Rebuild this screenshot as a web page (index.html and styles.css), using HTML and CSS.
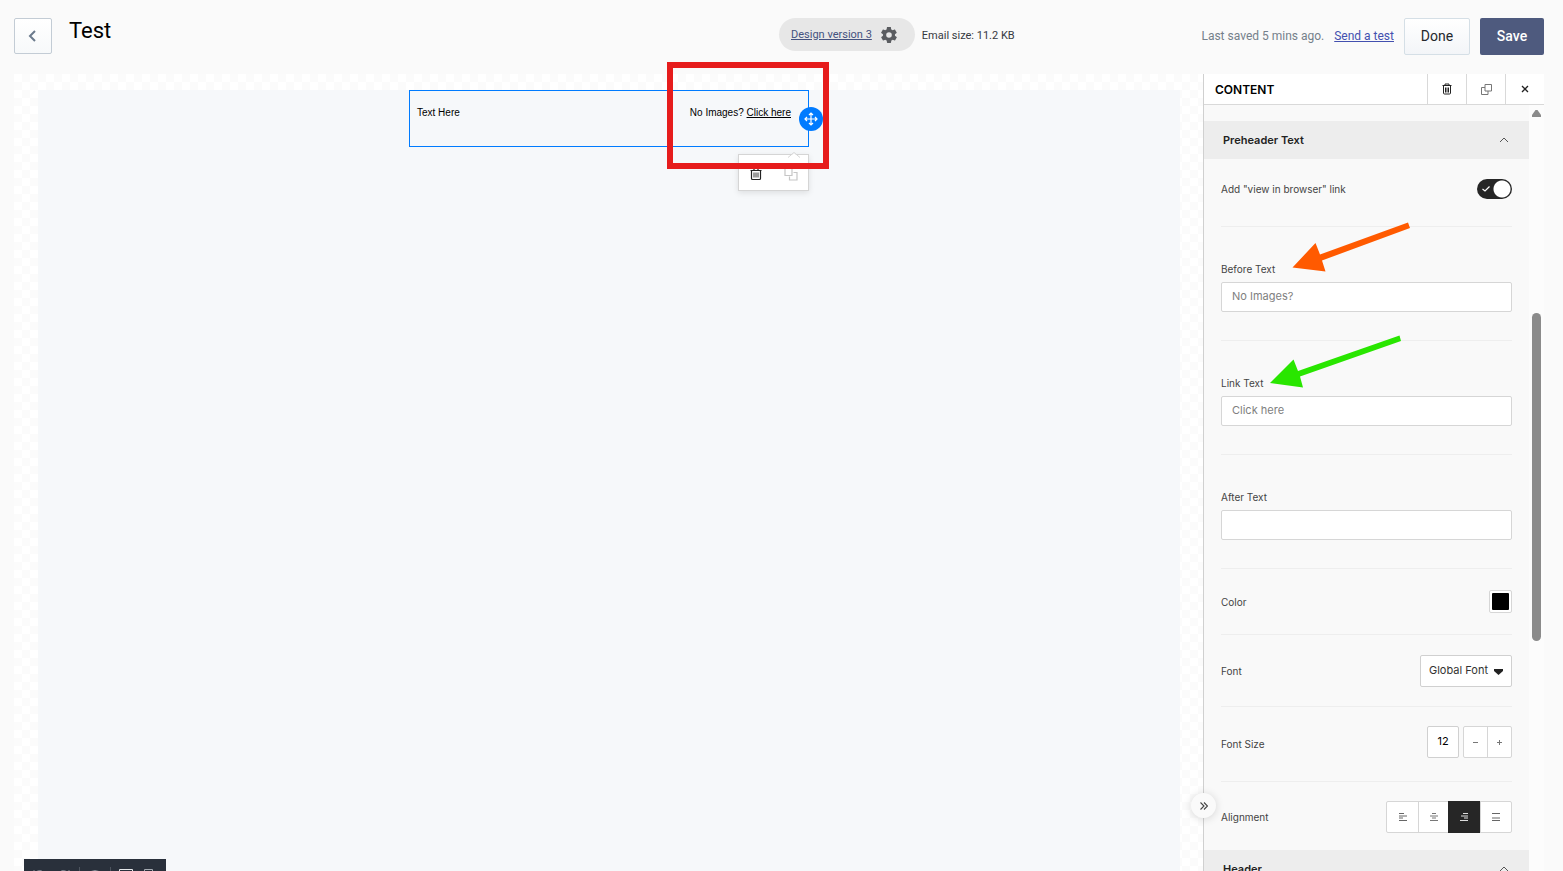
FILE: index.html
```
<!DOCTYPE html>
<html lang="en">
<head>
    <meta charset="UTF-8">
    <title>Test</title>
    <link rel="stylesheet" href="styles.css">
</head>
<body>

<!-- top bar -->
<header class="topbar">
    <button class="btn_back" type="button" aria-label="Back">
        <svg width="8" height="12" viewBox="0 0 8 12"><path d="M7 1L2 6l5 5" fill="none" stroke="#6b7a8c" stroke-width="2"/></svg>
    </button>
    <h1 class="title">Test</h1>
    <div class="version">
        <a href="#">Design version 3</a>
        <svg width="16" height="16" viewBox="2 2 20 20"><path fill="#5a5c60" d="M19.4 13c0-.3.1-.6.1-1s0-.7-.1-1l2.100-1.600c.2-.2.200-.400.100-.600l-2-3.500c-.1-.2-.4-.3-.6-.2l-2.500 1c-.5-.4-1.100-.7-1.700-1l-.4-2.600c0-.2-.2-.4-.5-.4h-4c-.3 0-.5.2-.5.4l-.4 2.600c-.6.3-1.200.6-1.700 1l-2.500-1c-.2-.1-.5 0-.6.2l-2 3.500c-.1.2-.1.500.1.600L4.500 11c0 .3-.1.600-.1 1s0 .7.1 1l-2.100 1.600c-.2.2-.2.400-.1.600l2 3.500c.1.2.4.3.6.2l2.500-1c.5.400 1.100.7 1.700 1l.4 2.600c0 .2.2.4.5.4h4c.3 0 .5-.2.5-.4l.4-2.600c.6-.3 1.200-.6 1.700-1l2.500 1c.2.1.5 0 .6-.2l2-3.500c.1-.2.1-.5-.1-.6L19.400 13zM12 15.500a3.500 3.500 0 1 1 0-7 3.500 3.500 0 0 1 0 7z"/></svg>
    </div>
    <span class="size">Email size: 11.2 KB</span>
    <div class="actions">
        <span class="saved">Last saved 5 mins ago.</span>
        <a class="send" href="#">Send a test</a>
        <button class="btn btn_done" type="button">Done</button>
        <button class="btn btn_save" type="button">Save</button>
    </div>
</header>

<div class="editor">

    <!-- email canvas -->
    <main class="stage">
        <div class="canvas">
            <div class="block">
                <span>Text Here</span>
                <span>No Images? <a href="#">Click here</a></span>
                <button class="move" type="button" aria-label="Move">
                    <svg width="14" height="14" viewBox="0 0 14 14"><path d="M7 1v12M1 7h12M5 3l2-2 2 2M5 11l2 2 2-2M3 5L1 7l2 2M11 5l2 2-2 2" fill="none" stroke="#fff" stroke-width="1.200"/></svg>
                </button>
                <div class="block_tools">
                    <svg class="caret" width="12" height="6" viewBox="0 0 12 6"><path d="M0 6l6-5 6 5z" fill="#fff"/><path d="M0 5.500l6-5 6 5" fill="none" stroke="#d5d5d5"/></svg>
                    <button type="button" aria-label="Delete">
                        <svg width="12" height="14" viewBox="0 0 12 14"><path d="M0.500 3.500h11M4 3V1.500h4V3M1.500 3.500v8q0 1 1 1h7q1 0 1-1v-8" fill="none" stroke="#222" stroke-width="1.200"/><path d="M4 5.500v5M6 5.500v5M8 5.500v5" stroke="#222" stroke-width=".9"/></svg>
                    </button>
                    <button type="button" aria-label="Duplicate">
                        <svg width="14" height="14" viewBox="0 0 14 14"><path d="M1 0.500h7v8H1zM9.500 5.500H13v7.500H5.500V9.500" fill="none" stroke="#c6c6c6" stroke-width="1.200"/></svg>
                    </button>
                </div>
                <div class="highlight"></div>
            </div>
        </div>

        <div class="dock">
            <svg width="142" height="36" viewBox="0 0 142 36" fill="none" stroke="#8b929b">
                <path d="M10 11v4h4M11 14q5-5 9 0M45 11v4h-4M44 14q-5-5-9 0M64 15q7-7 14 0-7 7-14 0"/>
                <path d="M55.500 8v18M86.500 8v18" stroke="#4d545e"/>
                <path d="M95.500 10.500h13v9h-13zM99 23.500h6" stroke="#e4e7ea"/>
                <path d="M120.500 10.500h8v13h-8z" stroke="#a5abb2"/>
            </svg>
        </div>
    </main>

    <!-- settings panel -->
    <aside class="panel">
        <div class="panel_head">
            <h2>CONTENT</h2>
            <button type="button" aria-label="Delete">
                <svg width="10" height="12" viewBox="0 0 10 12"><path d="M0.500 2.500h9M3 2.500V1h4v1.500M1.500 2.500V10q0 1 1 1h5q1 0 1-1V2.500M3.500 4.500v5M5 4.500v5M6.500 4.500v5" fill="none" stroke="#222"/></svg>
            </button>
            <button type="button" aria-label="Duplicate">
                <svg width="11" height="11" viewBox="0 0 11 11"><path d="M4 0.500h6.500V7H4zM4 3.500H0.500v7H7V7" fill="none" stroke="#777"/></svg>
            </button>
            <button type="button" aria-label="Close">
                <svg width="8" height="8" viewBox="0 0 8 8"><path d="M1 1l6 6M7 1L1 7" stroke="#222" stroke-width="1.300"/></svg>
            </button>
        </div>

        <div class="panel_body">
            <form class="settings">
                <div class="section">
                    <h3>Preheader Text</h3>
                    <svg width="10" height="6" viewBox="0 0 10 6"><path d="M1 5l4-4 4 4" fill="none" stroke="#555"/></svg>
                </div>

                <div class="row row_switch">
                    <label for="browser_link">Add "view in browser" link</label>
                    <span class="switch">
                        <input type="checkbox" id="browser_link" checked>
                        <svg width="8" height="6" viewBox="0 0 8 6"><path d="M0.500 3l2.500 2L7.500 0.500" fill="none" stroke="#fff" stroke-width="1.200"/></svg>
                    </span>
                </div>

                <div class="field">
                    <label for="before_text">Before Text</label>
                    <input type="text" id="before_text" value="No Images?">
                    <svg class="arrow arrow_before" width="118" height="50" viewBox="0 0 118 50"><path d="M0.500 45.500L23.500 21 28 32.500 116 .5 118 6 30 38.500 33.500 49.500z" fill="#ff5a00"/></svg>
                </div>

                <div class="field">
                    <label for="link_text">Link Text</label>
                    <input type="text" id="link_text" value="Click here">
                    <svg class="arrow arrow_link" width="132" height="53" viewBox="0 0 132 53"><path d="M0 48L23.500 24.500 28 36 129.500 .5 131 6 30 41.500 33 52.500z" fill="#29e600"/></svg>
                </div>

                <div class="field">
                    <label for="after_text">After Text</label>
                    <input type="text" id="after_text">
                </div>

                <div class="row row_color">
                    <label for="color">Color</label>
                    <input type="color" id="color" class="swatch" value="#000000">
                </div>

                <div class="row row_font">
                    <label for="font">Font</label>
                    <span class="select">
                        <select id="font"><option>Global Font</option></select>
                        <svg width="9" height="6" viewBox="0 0 9 6"><path d="M0 0h9v2L4.500 6 0 2z" fill="#222"/></svg>
                    </span>
                </div>

                <div class="row row_size">
                    <label for="font_size">Font Size</label>
                    <div class="stepper">
                        <input type="text" id="font_size" value="12">
                        <div class="group group_step">
                            <button type="button" aria-label="Smaller"><svg width="7" height="7" viewBox="0 0 7 7"><path d="M1 3.500h5" stroke="#777"/></svg></button>
                            <button type="button" aria-label="Larger"><svg width="7" height="7" viewBox="0 0 7 7"><path d="M1 3.500h5M3.500 1v5" stroke="#777"/></svg></button>
                        </div>
                    </div>
                </div>

                <div class="row row_align">
                    <span>Alignment</span>
                    <div class="group group_align">
                        <button type="button" aria-label="Left"><svg width="8" height="10" viewBox="0 0 8 10"><path d="M0 1.500h5M0 4h8M0 6h4M0 8.500h8" stroke="#666"/></svg></button>
                        <button type="button" aria-label="Center"><svg width="8" height="10" viewBox="0 0 8 10"><path d="M2 1.500h4M0 4h8M2 6h4M0 8.500h8" stroke="#777"/></svg></button>
                        <button type="button" class="active" aria-label="Right"><svg width="8" height="10" viewBox="0 0 8 10"><path d="M3 1.500h5M1 4h7M4 6h4M0 8.500h8" stroke="#ddd"/></svg></button>
                        <button type="button" aria-label="Justify"><svg width="8" height="10" viewBox="0 0 8 10"><path d="M0 1.500h8M0 6h8M0 8.500h8" stroke="#666"/></svg></button>
                    </div>
                </div>

                <div class="section">
                    <h3>Header</h3>
                    <svg width="10" height="6" viewBox="0 0 10 6"><path d="M1 5l4-4 4 4" fill="none" stroke="#555"/></svg>
                </div>
            </form>

            <div class="scrollbar">
                <svg width="9" height="7" viewBox="0 0 9 7"><path d="M3.500 0h2L9 5v2H0V5z" fill="#8b8b8b"/></svg>
                <div class="thumb"></div>
            </div>
        </div>

        <button class="collapse" type="button" aria-label="Collapse panel">
            <svg width="8" height="8" viewBox="0 0 8 8"><path d="M0.500 0.500L4 4 .5 7.500M4 .5L7.500 4 4 7.500" fill="none" stroke="#444" stroke-width="1.100"/></svg>
        </button>
    </aside>

</div>

</body>
</html>
```
FILE: styles.css
```
*{
    box-sizing: border-box;
}
body{
    margin: 0;
    height: 100vh;
    overflow: hidden;
    display: flex;
    flex-direction: column;
    background: #fafafa;
    font-family: Roboto, "Liberation Sans", sans-serif;
}
button, input, select{
    font-family: inherit;
    margin: 0;
    padding: 0;
}
button{
    display: flex;
    align-items: center;
    justify-content: center;
    border: 0;
    background: none;
}
svg{
    display: block;
    flex: none;
}

/* top bar */
.topbar{
    display: grid;
    grid-template-columns: 38px calc(50% - 38px) auto auto 1fr;
    align-items: start;
    flex: none;
    padding: 18px 19px 0 14px;
    height: 74px;
}
.btn_back{
    width: 38px;
    height: 36px;
    padding-right: 2px;
    border: 1px solid #c3ccd5;
    border-radius: 2px;
    background: linear-gradient(#fff, #f7f9fa);
}
.title{
    margin: 0 0 0 17px;
    font-size: 22px;
    line-height: 26px;
    font-weight: 400;
    color: #000;
}
.version{
    display: flex;
    align-items: center;
    gap: 9px;
    height: 33px;
    padding: 0 18px 0 12px;
    border-radius: 17px;
    background: #e7e7e7;
    font-size: 11px;
    line-height: 14px;
}
.version a{
    color: #44527f;
}
.size{
    margin-left: 7px;
    font-size: 11px;
    line-height: 35px;
    color: #36393f;
}
.actions{
    display: flex;
    justify-content: flex-end;
    gap: 10px;
    font-size: 12px;
    line-height: 36px;
}
.saved{
    color: #75808b;
}
.send{
    color: #4350af;
}
.btn{
    height: 37px;
    padding-bottom: 2px;
    border-radius: 2px;
    font-size: 14px;
}
.btn_done{
    width: 66px;
    border: 1px solid #d5dfe6;
    background: linear-gradient(#fff, #f3f5f8);
    color: #25282c;
}
.btn_save{
    width: 64px;
    background: #4e5a7e;
    color: #fff;
    font-weight: 500;
}

.editor{
    display: flex;
    flex: 1;
    min-height: 0;
    margin: 0 19px 0 14px;
}

/* canvas */
.stage{
    position: relative;
    display: flex;
    flex: 1;
    padding: 16px 23px 0 24px;
    background: conic-gradient(#fbfbfb 25%, #fff 0 50%, #fbfbfb 0 75%, #fff 0) 0 0 / 16px 16px;
}
.canvas{
    flex: 1;
    background: #f6f8fa;
}
.block{
    position: relative;
    display: flex;
    justify-content: space-between;
    width: 400px;
    height: 57px;
    margin: 0 auto;
    padding: 15px 17px 0 7px;
    border: 1px solid #007bff;
    font-family: "Liberation Sans", Arial, sans-serif;
    font-size: 10px;
    line-height: 14px;
    color: #000;
}
.block a{
    color: #000;
}
.move{
    position: absolute;
    top: 16px;
    right: -15px;
    width: 24px;
    height: 24px;
    padding-right: 1px;
    border-radius: 50%;
    background: #007bff;
}
.block_tools{
    position: absolute;
    top: 63px;
    right: -1px;
    display: flex;
    width: 71px;
    height: 37px;
    border: 1px solid #d5d5d5;
    background: #fff;
    box-shadow: 0 2px 6px rgba(0, 0, 0, .1);
}
.block_tools button{
    flex: 1;
    padding-top: 3px;
}
.caret{
    position: absolute;
    top: -3px;
    right: 8px;
}
.highlight{
    position: absolute;
    top: -29px;
    left: 257px;
    width: 162px;
    height: 107px;
    border: 6px solid #e61c1c;
    pointer-events: none;
}
.dock{
    position: absolute;
    left: 10px;
    bottom: -24px;
    height: 36px;
    background: #29303b;
}

/* panel */
.panel{
    position: relative;
    display: flex;
    flex-direction: column;
    width: 341px;
    border-left: 1px solid #d0d0d0;
    background: #f9f9f9;
    font-family: Inter, "Liberation Sans", sans-serif;
    font-size: 10px;
    color: #444;
}
.panel_head{
    display: flex;
    flex: none;
    height: 31px;
    border-bottom: 1px solid #d9d9d9;
    background: #fff;
}
.panel_head h2{
    flex: 1;
    margin: 0 0 0 11px;
    font-size: 12px;
    line-height: 31px;
    font-weight: 600;
    color: #000;
}
.panel_head button{
    width: 39px;
    border-left: 1px solid #d9d9d9;
}
.panel_body{
    display: flex;
    flex: 1;
    min-height: 0;
}
.settings{
    flex: 1;
    padding-top: 16px;
    overflow: hidden;
}
.section{
    display: flex;
    align-items: center;
    justify-content: space-between;
    height: 38px;
    padding: 0 20px 0 19px;
    background: #ededed;
}
.section h3{
    margin: 0;
    padding-bottom: 1px;
    font-size: 11px;
    line-height: 14px;
    font-weight: 600;
    color: #222;
}
.row, .field{
    margin: 0 17px;
    border-bottom: 1px solid #eee;
}
.row{
    display: flex;
    align-items: center;
    justify-content: space-between;
}
.row_switch{
    height: 68px;
    padding-bottom: 7px;
}
.row_color{
    height: 66px;
}
.row_font{
    height: 72px;
}
.row_size{
    height: 75px;
}
.row_align{
    height: 68px;
    padding-top: 2px;
    border-bottom: 0;
}
.field{
    position: relative;
    display: flex;
    flex-direction: column;
    gap: 5px;
    padding: 34px 0 28px;
}
.field label{
    line-height: 16px;
}
.field input{
    width: 100%;
    height: 30px;
    padding: 0 10px 2px;
    border: 1px solid #d6d6d6;
    border-radius: 2px;
    background: #fff;
    font-size: 11px;
    color: #808080;
}
.switch{
    position: relative;
}
.switch input{
    display: block;
    appearance: none;
    width: 35px;
    height: 20px;
    border-radius: 10px;
    background: radial-gradient(circle at 25px 10px, #fff 8px, #262626 9px);
}
.switch svg{
    position: absolute;
    top: 7px;
    left: 5px;
    pointer-events: none;
}
.swatch{
    appearance: none;
    width: 23px;
    height: 23px;
    padding: 2px;
    border: 1px solid #d6d6d6;
    border-radius: 2px;
    background: #fff;
}
.swatch::-webkit-color-swatch-wrapper{
    padding: 0;
}
.swatch::-webkit-color-swatch{
    border: 0;
    border-radius: 1px;
}
.select{
    position: relative;
}
.select select{
    display: block;
    appearance: none;
    width: 92px;
    height: 32px;
    padding: 0 8px 2px;
    border: 1px solid #d0d0d0;
    border-radius: 2px;
    background: #fff;
    font-size: 11px;
    color: #333;
}
.select svg{
    position: absolute;
    top: 14px;
    right: 9px;
    pointer-events: none;
}
.stepper{
    display: flex;
    gap: 4px;
    padding-bottom: 4px;
}
.stepper input{
    width: 32px;
    height: 32px;
    padding-bottom: 2px;
    border: 1px solid #d0d0d0;
    border-radius: 2px;
    background: #fff;
    font-size: 11px;
    text-align: center;
    color: #000;
}
.group{
    display: flex;
    height: 32px;
    border: 1px solid #d6d6d6;
    border-radius: 2px;
    background: #fff;
}
.group button + button{
    border-left: 1px solid #d6d6d6;
}
.group_step{
    width: 49px;
}
.group_step button{
    flex: 1;
}
.group_align button{
    width: 31px;
}
.group_align button.active{
    width: 32px;
    margin: -1px 0 -1px -1px;
    border: 0;
    background: #262626;
}
.arrow{
    position: absolute;
    pointer-events: none;
}
.arrow_before{
    top: -5px;
    left: 71px;
}
.arrow_link{
    top: -6px;
    left: 49px;
}
.scrollbar{
    width: 15px;
    padding: 5px 3px 0;
    background: #fcfcfc;
}
.thumb{
    height: 328px;
    margin-top: 196px;
    border-radius: 5px;
    background: #8b8b8b;
}
.collapse{
    position: absolute;
    left: -13px;
    bottom: 53px;
    width: 25px;
    height: 25px;
    border-radius: 50%;
    background: #fafafa;
    box-shadow: 0 1px 8px rgba(0, 0, 0, .15);
}
```
